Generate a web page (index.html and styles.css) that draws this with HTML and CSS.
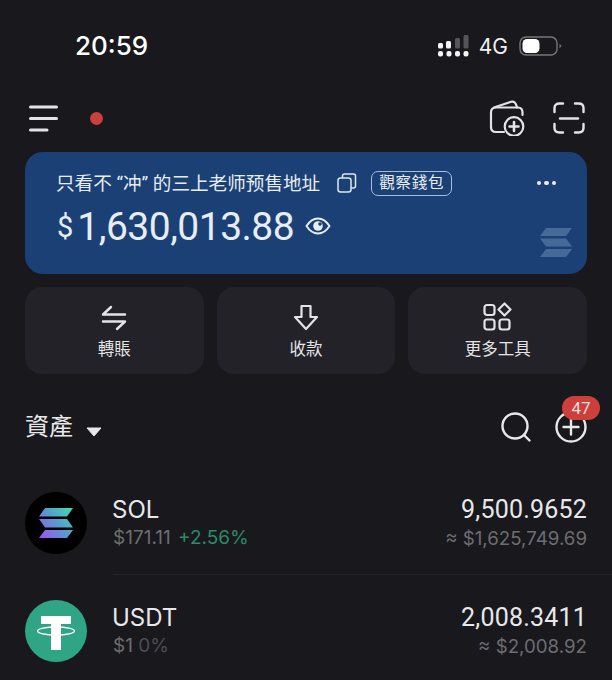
FILE: index.html
```html
<!DOCTYPE html>
<html lang="zh-Hant">
<head>
  <meta charset="UTF-8">
  <meta name="viewport" content="width=device-width, initial-scale=1.0">
  <title>錢包</title>
  <link rel="stylesheet" href="styles.css">
</head>
<body>
  <div class="status-bar">
    <span class="clock">20:59</span>
    <div class="status-right">
      <svg class="signal" width="32" height="22" viewBox="0 0 32 22">
        <g fill="#f4f4f4">
          <rect x="0" y="8" width="5" height="5.500" rx="1.500"/>
          <rect x="8" y="6" width="5" height="7.500" rx="1.500"/>
          <rect x="0" y="16" width="5" height="5.500" rx="2"/>
          <rect x="8.500" y="16" width="5" height="5.500" rx="2"/>
          <rect x="17" y="16" width="5" height="5.500" rx="2"/>
          <rect x="25.500" y="16" width="5" height="5.500" rx="2"/>
        </g>
        <g fill="#55555a">
          <rect x="17" y="3" width="5" height="10.500" rx="1.500"/>
          <rect x="25.500" y="0" width="5" height="13.500" rx="1.500"/>
        </g>
      </svg>
      <span class="network">4G</span>
      <svg class="battery" width="43" height="22" viewBox="0 0 43 22">
        <rect x="1" y="2" width="37" height="18" rx="6" fill="none" stroke="#77777b" stroke-width="1.400"/>
        <rect x="3.500" y="4" width="17" height="14" rx="4.500" fill="#fff"/>
        <path d="M40.500 8.500 L42.500 11 L40.500 13.500 Z" fill="#77777b"/>
      </svg>
    </div>
  </div>

  <div class="toolbar">
    <div class="toolbar-left">
      <svg width="29" height="28" viewBox="0 0 29 28" fill="none" stroke="#e4e4e6" stroke-width="3" stroke-linecap="round">
        <path d="M1.500 3H27.500"/>
        <path d="M1.500 14.500H27.500"/>
        <path d="M1.500 26H18"/>
      </svg>
      <span class="red-dot"></span>
    </div>
    <div class="toolbar-right">
      <svg width="36" height="36" viewBox="0 0 36 36" fill="none" stroke="#e4e4e6" stroke-width="2.200" stroke-linecap="round" stroke-linejoin="round">
        <path d="M2 27.500V12.500C2 9.500 3.800 7.500 7 7.500H29C32 7.500 33.500 9.500 33.500 12.500V15"/>
        <path d="M5 7.500L22 1.800C25 1 27 2.500 28 7.500"/>
        <path d="M2 27C2 30.500 4 32 7 32H15"/>
        <circle cx="25" cy="26.500" r="9.300" fill="#18181d"/>
        <path d="M25 22V31M20.500 26.500H29.500" stroke-width="2.600"/>
      </svg>
      <svg width="32" height="32" viewBox="0 0 32 32" fill="none" stroke="#e4e4e6" stroke-width="2.400" stroke-linecap="round" stroke-linejoin="round">
        <path d="M1.500 10V6C1.500 3 3.500 1.500 6.500 1.500H10"/>
        <path d="M22 1.500H25.500C28.500 1.500 30.500 3 30.500 6V10"/>
        <path d="M1.500 22V26C1.500 29 3.500 30.500 6.500 30.500H10"/>
        <path d="M22 30.500H25.500C28.500 30.500 30.500 29 30.500 26V22"/>
        <path d="M7 16.500H25"/>
      </svg>
    </div>
  </div>

  <section class="wallet-card">
    <div class="wallet-top">
      <span class="wallet-name">只看不 “冲” 的三上老师预售地址</span>
      <svg class="copy-icon" width="20" height="20" viewBox="0 0 20 20" fill="none" stroke="#dfe6f0" stroke-width="1.500" stroke-linejoin="round">
        <rect x="1" y="5" width="13" height="14" rx="2.500"/>
        <path d="M5.500 5V3C5.500 1.800 6.300 1 7.500 1H16.500C17.700 1 18.500 1.800 18.500 3V13C18.500 14.200 17.700 15 16.500 15H14"/>
      </svg>
      <span class="watch-tag">觀察錢包</span>
      <span class="more-dots"><i></i><i></i><i></i></span>
    </div>
    <div class="wallet-balance">
      <span class="currency">$</span><span class="amount">1,630,013.88</span>
      <svg class="eye-icon" width="26" height="18" viewBox="0 0 26 18" fill="none">
        <path d="M1.500 9C5 3.500 8.500 1.500 13 1.500S21 3.500 24.500 9C21 14.500 17.500 16.500 13 16.500S5 14.500 1.500 9Z" stroke="#e8edf4" stroke-width="1.900"/>
        <circle cx="13" cy="9" r="4.800" fill="#e8edf4"/>
        <circle cx="15" cy="7" r="1.800" fill="#1b4075"/>
      </svg>
    </div>
    <svg class="chain-mark" width="32" height="29" viewBox="0 0 32 29" fill="#466a98">
      <path d="M6 0H32L26 8H0Z"/>
      <path d="M0 10.500H26L32 18.500H6Z"/>
      <path d="M6 21H32L26 29H0Z"/>
    </svg>
  </section>

  <nav class="actions">
    <a class="action">
      <div class="action-icon">
        <svg width="26" height="26" viewBox="0 0 26 26" fill="none" stroke="#e4e4e6" stroke-width="2.400" stroke-linecap="round" stroke-linejoin="round">
          <path d="M24 9.500H2L10 2"/>
          <path d="M2 16.500H24L16 24"/>
        </svg>
      </div>
      <span>轉賬</span>
    </a>
    <a class="action">
      <div class="action-icon">
        <svg width="26" height="27" viewBox="0 0 26 27" fill="none" stroke="#e4e4e6" stroke-width="2.200" stroke-linejoin="round">
          <path d="M8.500 2H17.500V13H24L13 25L2 13H8.500Z"/>
        </svg>
      </div>
      <span>收款</span>
    </a>
    <a class="action">
      <div class="action-icon">
        <svg width="29" height="29" viewBox="0 0 29 29" fill="none" stroke="#e4e4e6" stroke-width="2.200" stroke-linejoin="round">
          <rect x="1.500" y="3" width="10" height="10" rx="2.500"/>
          <rect x="1.500" y="17.500" width="10" height="10" rx="2.500"/>
          <rect x="16.500" y="17.500" width="10" height="10" rx="2.500"/>
          <path d="M21.500 1.500L27.500 7.500L21.500 13.500L15.500 7.500Z"/>
        </svg>
      </div>
      <span>更多工具</span>
    </a>
  </nav>

  <div class="assets-head">
    <div class="assets-title">
      <span>資產</span>
      <svg class="caret" width="16" height="10" viewBox="0 0 16 10"><path d="M1 1H15L8 9Z" fill="#e8e8ea" stroke="#e8e8ea" stroke-linejoin="round"/></svg>
    </div>
    <div class="assets-tools">
      <svg width="30" height="30" viewBox="0 0 30 30" fill="none" stroke="#e8e8ea" stroke-width="2.400" stroke-linecap="round">
        <circle cx="14" cy="14" r="12.500"/>
        <path d="M23 23L28.500 28.500"/>
      </svg>
      <div class="add-token">
        <svg width="32" height="32" viewBox="0 0 32 32" fill="none" stroke="#e8e8ea" stroke-width="2.400" stroke-linecap="round">
          <circle cx="16" cy="16" r="14.500"/>
          <path d="M16 8.500V23.500M8.500 16H23.500"/>
        </svg>
        <span class="badge">47</span>
      </div>
    </div>
  </div>

  <ul class="token-list">
    <li class="token">
      <svg class="token-logo" width="62" height="62" viewBox="0 0 62 62">
        <defs>
          <linearGradient id="solGrad" gradientUnits="userSpaceOnUse" x1="14" y1="46" x2="48" y2="16">
            <stop offset="0" stop-color="#a64cf5"/>
            <stop offset="0.500" stop-color="#5a98cf"/>
            <stop offset="1" stop-color="#3fe0a6"/>
          </linearGradient>
        </defs>
        <circle cx="31" cy="31" r="31" fill="#000"/>
        <path fill="url(#solGrad)" d="M20 16H48L42 24.500H14Z M14 27H42L48 35.500H20Z M20 38H48L42 46H14Z"/>
      </svg>
      <div class="token-info">
        <div class="token-name">SOL</div>
        <div class="token-price">$171.11 <span class="up">+2.56%</span></div>
      </div>
      <div class="token-value">
        <div class="qty">9,500.9652</div>
        <div class="fiat">≈ $1,625,749.69</div>
      </div>
    </li>
    <li class="token">
      <svg class="token-logo" width="62" height="62" viewBox="0 0 62 62">
        <circle cx="31" cy="31" r="31" fill="#2fa585"/>
        <path fill="#fff" d="M16 16H46V24H36V50H26V24H16Z"/>
        <ellipse cx="31" cy="31" rx="18.500" ry="4" fill="none" stroke="#fff" stroke-width="1.300"/>
      </svg>
      <div class="token-info">
        <div class="token-name">USDT</div>
        <div class="token-price">$1 <span class="flat">0%</span></div>
      </div>
      <div class="token-value">
        <div class="qty">2,008.3411</div>
        <div class="fiat">≈ $2,008.92</div>
      </div>
    </li>
  </ul>
</body>
</html>
```

FILE: styles.css
```css
:root {
  --bg: #18181d;
  --panel: #222228;
  --text: #e8e8ea;
  --muted: #6d6d71;
  --card-blue: #1b4075;
  --red: #cc3f3b;
}
html, body {
  overflow: hidden;
}
body {
  margin: 0;
  width: 612px;
  height: 680px;
  background: var(--bg);
  color: var(--text);
  font-family: "Roboto", "Noto Sans CJK TC", sans-serif;
}
.status-bar {
  display: flex;
  justify-content: space-between;
  align-items: center;
  height: 32px;
  padding: 30px 50px 0 75px;
}
.clock {
  font-family: "Inter", sans-serif;
  font-size: 26px;
  font-weight: 500;
  color: #fff;
  margin-top: -2px;
}
.status-right {
  display: flex;
  align-items: center;
  gap: 9px;
}
.network {
  font-family: "Inter", sans-serif;
  font-size: 21px;
  color: #f0f0f0;
  margin-right: 2px;
}
.toolbar {
  display: flex;
  justify-content: space-between;
  align-items: center;
  height: 36px;
  margin-top: 38px;
  padding: 0 27px 0 29px;
}
.toolbar-left {
  display: flex;
  align-items: center;
  gap: 32px;
}
.toolbar-right {
  display: flex;
  align-items: center;
  gap: 28px;
}
.red-dot {
  width: 13px;
  height: 13px;
  border-radius: 50%;
  background: var(--red);
}
.wallet-card {
  position: relative;
  box-sizing: border-box;
  height: 122px;
  margin: 16px 25px 0;
  padding: 18px 32px 0;
  background: var(--card-blue);
  border-radius: 18px;
}
.wallet-top {
  display: flex;
  align-items: center;
  height: 26px;
}
.wallet-name {
  font-size: 18.600px;
  line-height: 24px;
  color: #e9edf3;
  white-space: nowrap;
  margin-left: -1px;
  margin-top: 2px;
}
.copy-icon {
  margin-left: 17px;
}
.watch-tag {
  box-sizing: border-box;
  height: 25px;
  margin-left: 14px;
  padding: 0 7px;
  border: 1px solid #a9bdd9;
  border-radius: 7px;
  font-size: 15.500px;
  line-height: 22px;
  letter-spacing: 0.800px;
  color: #e9edf3;
}
.more-dots {
  display: flex;
  gap: 3px;
  margin-left: auto;
  margin-right: -1px;
}
.more-dots i {
  width: 4.500px;
  height: 4.500px;
  border-radius: 50%;
  background: #e9edf3;
}
.wallet-balance {
  display: flex;
  align-items: center;
  height: 46px;
  margin-top: 8px;
  color: #e8edf4;
}
.currency {
  font-size: 29px;
  margin-right: 4px;
}
.amount {
  font-size: 39px;
  letter-spacing: -0.500px;
}
.eye-icon {
  margin-left: 11px;
  margin-top: -2px;
}
.chain-mark {
  position: absolute;
  right: 15px;
  bottom: 17px;
}
.actions {
  display: grid;
  grid-template-columns: repeat(3, 1fr);
  gap: 13px;
  margin: 13px 25px 0;
}
.action {
  display: flex;
  flex-direction: column;
  align-items: center;
  box-sizing: border-box;
  height: 87px;
  padding-top: 15px;
  background: var(--panel);
  border-radius: 17px;
  font-size: 16.500px;
  line-height: 20px;
  color: #e4e4e6;
}
.action-icon {
  display: flex;
  align-items: flex-end;
  height: 29px;
  margin-bottom: 9px;
}
.assets-head {
  display: flex;
  justify-content: space-between;
  align-items: center;
  height: 40px;
  margin-top: 33px;
  padding: 0 25px;
}
.assets-title {
  display: flex;
  align-items: center;
  gap: 13px;
  font-size: 24px;
  line-height: 30px;
}
.caret {
  margin-top: 10px;
}
.assets-tools {
  display: flex;
  align-items: center;
  gap: 24px;
}
.add-token {
  position: relative;
  height: 32px;
}
.badge {
  position: absolute;
  top: -15px;
  right: -13px;
  width: 38px;
  height: 24px;
  border-radius: 12px;
  background: var(--red);
  color: #f6dcdb;
  font-size: 17px;
  line-height: 24px;
  text-align: center;
}
.token-list {
  list-style: none;
  margin: 45px 0 0;
  padding: 0;
}
.token {
  display: flex;
  align-items: center;
  padding: 0 25px;
  height: 62px;
  margin-bottom: 46px;
  position: relative;
}
.token:first-child::after {
  content: "";
  position: absolute;
  left: 113px;
  right: 0;
  bottom: -21px;
  height: 1px;
  background: #232328;
}
.token-logo {
  flex: none;
}
.token-info {
  margin-left: 26px;
  padding-top: 2px;
}
.token-name {
  font-family: "Inter", sans-serif;
  font-size: 24px;
  line-height: 28px;
  margin-left: -1px;
  color: #e8e8ea;
}
.token-price {
  font-family: "Inter", sans-serif;
  font-size: 19px;
  line-height: 28px;
  color: var(--muted);
}
.up {
  color: #2c8a68;
  margin-left: 2px;
}
.flat {
  color: #4d4d52;
}
.token-value {
  margin-left: auto;
  padding-top: 2px;
  text-align: right;
}
.qty {
  font-size: 25px;
  line-height: 28px;
  letter-spacing: 0.200px;
  color: #e8e8ea;
}
.fiat {
  font-family: "Inter", sans-serif;
  font-size: 18.700px;
  line-height: 28px;
  margin-top: 1px;
  color: var(--muted);
}
```
